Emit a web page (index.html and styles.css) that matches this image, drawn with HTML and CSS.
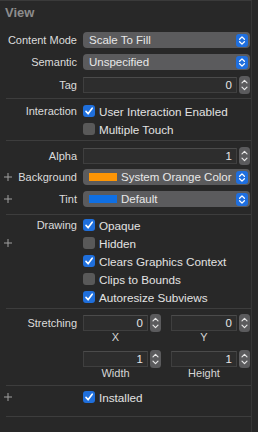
FILE: index.html
```html
<!DOCTYPE html>
<html lang="en">
<head>
    <meta charset="UTF-8">
    <meta name="viewport" content="width=device-width, initial-scale=1.0">
    <title>View Inspector</title>
    <link rel="stylesheet" href="styles.css">
</head>
<body>
    <div class="panel">
        <div class="header">View</div>

        <div class="section s-view">
            <div class="row">
                <span class="label">Content Mode</span>
                <div class="popup"><span>Scale To Fill</span>
                    <svg class="popup-arrows" width="12" height="13" viewBox="0 0 12 13"><rect width="12" height="13" rx="3" fill="#1f6fdf"/><path d="M3.6 5.2 L6 2.9 L8.4 5.2 M3.6 7.8 L6 10.1 L8.4 7.8" stroke="#fff" stroke-width="1.3" fill="none" stroke-linecap="round" stroke-linejoin="round"/></svg>
                </div>
            </div>
            <div class="row">
                <span class="label">Semantic</span>
                <div class="popup"><span>Unspecified</span>
                    <svg class="popup-arrows" width="12" height="13" viewBox="0 0 12 13"><rect width="12" height="13" rx="3" fill="#1f6fdf"/><path d="M3.6 5.2 L6 2.9 L8.4 5.2 M3.6 7.8 L6 10.1 L8.4 7.8" stroke="#fff" stroke-width="1.3" fill="none" stroke-linecap="round" stroke-linejoin="round"/></svg>
                </div>
            </div>
            <div class="row tag-row">
                <span class="label">Tag</span>
                <div class="num">
                    <div class="field">0</div>
                    <svg class="stepper" width="11" height="18" viewBox="0 0 11 18"><rect width="11" height="18" rx="3.5" fill="#5b5b5d"/><path d="M3 6.8 L5.5 4.3 L8 6.8 M3 11.2 L5.5 13.7 L8 11.2" stroke="#e8e8e8" stroke-width="1.2" fill="none" stroke-linecap="round" stroke-linejoin="round"/></svg>
                </div>
            </div>
        </div>
        <div class="sep"></div>

        <div class="section s-interaction">
            <div class="row check-row">
                <span class="label">Interaction</span>
                <div class="check"><span class="box on"><svg width="12" height="12" viewBox="0 0 12 12"><path d="M3 6.4 L5.1 8.8 L9.2 3.2" stroke="#fff" stroke-width="1.6" fill="none" stroke-linecap="round" stroke-linejoin="round"/></svg></span>User Interaction Enabled</div>
            </div>
            <div class="row check-row">
                <span class="label"></span>
                <div class="check"><span class="box"></span>Multiple Touch</div>
            </div>
        </div>
        <div class="sep"></div>

        <div class="section s-color">
            <div class="row alpha-row">
                <span class="label">Alpha</span>
                <div class="num">
                    <div class="field">1</div>
                    <svg class="stepper" width="11" height="18" viewBox="0 0 11 18"><rect width="11" height="18" rx="3.5" fill="#5b5b5d"/><path d="M3 6.8 L5.5 4.3 L8 6.8 M3 11.2 L5.5 13.7 L8 11.2" stroke="#e8e8e8" stroke-width="1.2" fill="none" stroke-linecap="round" stroke-linejoin="round"/></svg>
                </div>
            </div>
            <div class="row">
                <span class="label"><svg class="plus" width="8" height="8" viewBox="0 0 8 8"><path d="M4 0 V8 M0 4 H8" stroke="#a0a0a0" stroke-width="1"/></svg>Background</span>
                <div class="popup"><span class="swatch orange"></span><span>System Orange Color</span>
                    <svg class="popup-arrows" width="12" height="13" viewBox="0 0 12 13"><rect width="12" height="13" rx="3" fill="#1f6fdf"/><path d="M3.6 5.2 L6 2.9 L8.4 5.2 M3.6 7.8 L6 10.1 L8.4 7.8" stroke="#fff" stroke-width="1.3" fill="none" stroke-linecap="round" stroke-linejoin="round"/></svg>
                </div>
            </div>
            <div class="row">
                <span class="label"><svg class="plus" width="8" height="8" viewBox="0 0 8 8"><path d="M4 0 V8 M0 4 H8" stroke="#a0a0a0" stroke-width="1"/></svg>Tint</span>
                <div class="popup"><span class="swatch blue"></span><span>Default</span>
                    <svg class="popup-arrows" width="12" height="13" viewBox="0 0 12 13"><rect width="12" height="13" rx="3" fill="#1f6fdf"/><path d="M3.6 5.2 L6 2.9 L8.4 5.2 M3.6 7.8 L6 10.1 L8.4 7.8" stroke="#fff" stroke-width="1.3" fill="none" stroke-linecap="round" stroke-linejoin="round"/></svg>
                </div>
            </div>
        </div>
        <div class="sep"></div>

        <div class="section s-drawing">
            <div class="row check-row">
                <span class="label">Drawing</span>
                <div class="check"><span class="box on"><svg width="12" height="12" viewBox="0 0 12 12"><path d="M3 6.4 L5.1 8.8 L9.2 3.2" stroke="#fff" stroke-width="1.6" fill="none" stroke-linecap="round" stroke-linejoin="round"/></svg></span>Opaque</div>
            </div>
            <div class="row check-row">
                <span class="label"><svg class="plus" width="8" height="8" viewBox="0 0 8 8"><path d="M4 0 V8 M0 4 H8" stroke="#a0a0a0" stroke-width="1"/></svg></span>
                <div class="check"><span class="box"></span>Hidden</div>
            </div>
            <div class="row check-row">
                <span class="label"></span>
                <div class="check"><span class="box on"><svg width="12" height="12" viewBox="0 0 12 12"><path d="M3 6.4 L5.1 8.8 L9.2 3.2" stroke="#fff" stroke-width="1.6" fill="none" stroke-linecap="round" stroke-linejoin="round"/></svg></span>Clears Graphics Context</div>
            </div>
            <div class="row check-row">
                <span class="label"></span>
                <div class="check"><span class="box"></span>Clips to Bounds</div>
            </div>
            <div class="row check-row">
                <span class="label"></span>
                <div class="check"><span class="box on"><svg width="12" height="12" viewBox="0 0 12 12"><path d="M3 6.4 L5.1 8.8 L9.2 3.2" stroke="#fff" stroke-width="1.6" fill="none" stroke-linecap="round" stroke-linejoin="round"/></svg></span>Autoresize Subviews</div>
            </div>
        </div>
        <div class="sep"></div>

        <div class="section s-stretch">
            <div class="row pair-row">
                <span class="label">Stretching</span>
                <div class="pair">
                    <div class="cell">
                        <div class="num">
                            <div class="field">0</div>
                            <svg class="stepper" width="11" height="18" viewBox="0 0 11 18"><rect width="11" height="18" rx="3.5" fill="#5b5b5d"/><path d="M3 6.8 L5.5 4.3 L8 6.8 M3 11.2 L5.5 13.7 L8 11.2" stroke="#e8e8e8" stroke-width="1.2" fill="none" stroke-linecap="round" stroke-linejoin="round"/></svg>
                        </div>
                        <div class="sub">X</div>
                    </div>
                    <div class="cell">
                        <div class="num">
                            <div class="field">0</div>
                            <svg class="stepper" width="11" height="18" viewBox="0 0 11 18"><rect width="11" height="18" rx="3.5" fill="#5b5b5d"/><path d="M3 6.8 L5.5 4.3 L8 6.8 M3 11.2 L5.5 13.7 L8 11.2" stroke="#e8e8e8" stroke-width="1.2" fill="none" stroke-linecap="round" stroke-linejoin="round"/></svg>
                        </div>
                        <div class="sub">Y</div>
                    </div>
                </div>
            </div>
            <div class="row pair-row second">
                <span class="label"></span>
                <div class="pair">
                    <div class="cell">
                        <div class="num">
                            <div class="field">1</div>
                            <svg class="stepper" width="11" height="18" viewBox="0 0 11 18"><rect width="11" height="18" rx="3.5" fill="#5b5b5d"/><path d="M3 6.8 L5.5 4.3 L8 6.8 M3 11.2 L5.5 13.7 L8 11.2" stroke="#e8e8e8" stroke-width="1.2" fill="none" stroke-linecap="round" stroke-linejoin="round"/></svg>
                        </div>
                        <div class="sub">Width</div>
                    </div>
                    <div class="cell">
                        <div class="num">
                            <div class="field">1</div>
                            <svg class="stepper" width="11" height="18" viewBox="0 0 11 18"><rect width="11" height="18" rx="3.5" fill="#5b5b5d"/><path d="M3 6.8 L5.5 4.3 L8 6.8 M3 11.2 L5.5 13.7 L8 11.2" stroke="#e8e8e8" stroke-width="1.2" fill="none" stroke-linecap="round" stroke-linejoin="round"/></svg>
                        </div>
                        <div class="sub">Height</div>
                    </div>
                </div>
            </div>
        </div>
        <div class="sep"></div>

        <div class="section s-installed">
            <div class="row check-row">
                <span class="label"><svg class="plus" width="8" height="8" viewBox="0 0 8 8"><path d="M4 0 V8 M0 4 H8" stroke="#a0a0a0" stroke-width="1"/></svg></span>
                <div class="check"><span class="box on"><svg width="12" height="12" viewBox="0 0 12 12"><path d="M3 6.4 L5.1 8.8 L9.2 3.2" stroke="#fff" stroke-width="1.6" fill="none" stroke-linecap="round" stroke-linejoin="round"/></svg></span>Installed</div>
            </div>
        </div>
        <div class="sep"></div>
    </div>
</body>
</html>
```

FILE: styles.css
```css
body {
    margin: 0;
    background-color: #282828;
    font-family: "Liberation Sans", Arial, sans-serif;
    font-size: 11px;
    color: #dcdcdc;
}
.panel {
    width: 251px;
    height: 431px;
    border-top: 1px solid #3a3a3a;
    border-right: 1px solid #363636;
}
.header {
    height: 28px;
    line-height: 24px;
    padding-left: 5px;
    font-size: 13px;
    font-weight: bold;
    color: #8d8d8d;
}
.sep {
    height: 1px;
    margin-left: 6px;
    background-color: #3d3d3d;
}
.row {
    display: grid;
    grid-template-columns: 77px 167px;
    column-gap: 6px;
    align-items: center;
    height: 22px;
}
.label {
    display: flex;
    align-items: center;
    justify-content: flex-end;
    white-space: nowrap;
}
.plus {
    margin-left: 4px;
    margin-right: auto;
}

/* sections */
.s-view {
    padding-bottom: 2px;
}
.tag-row {
    margin-top: 1px;
}
.s-interaction {
    padding-top: 3px;
    padding-bottom: 2px;
}
.s-color {
    padding-top: 4px;
    padding-bottom: 4px;
}
.alpha-row {
    height: 21px;
}
.s-drawing {
    padding-top: 1px;
    padding-bottom: 2px;
}
.s-stretch {
    padding-top: 6px;
    padding-bottom: 5px;
}
.s-installed {
    padding-top: 2px;
    padding-bottom: 10px;
}

/* popup button */
.popup {
    display: flex;
    align-items: center;
    height: 16px;
    padding-left: 6px;
    padding-right: 2px;
    border-radius: 4px;
    background-color: #5b5b5d;
    color: #e8e8e8;
    font-size: 11.5px;
}
.popup-arrows {
    margin-left: auto;
}
.swatch {
    width: 28px;
    height: 8px;
    margin-right: 4px;
}
.orange {
    background-color: #fd9505;
}
.blue {
    background-color: #0f6fe3;
}

/* number fields */
.num {
    display: flex;
    align-items: center;
    gap: 2px;
    height: 16px;
}
.field {
    flex: 1;
    height: 16px;
    box-sizing: border-box;
    background-color: #2d2d2d;
    border: 1px solid #3f3f3f;
    border-top-color: #4b4b4b;
    text-align: right;
    padding-right: 4px;
    line-height: 14px;
    font-size: 11.5px;
    color: #e6e6e6;
}

/* checkboxes */
.check-row {
    height: 18px;
}
.check {
    display: flex;
    align-items: center;
    font-size: 11.7px;
    color: #e2e2e2;
    white-space: nowrap;
}
.box {
    width: 12px;
    height: 12px;
    margin-right: 4px;
    border-radius: 3px;
    background-color: #595959;
}
.box.on {
    background-color: #1f6fdc;
}
.box svg {
    display: block;
}

/* stretching */
.pair-row {
    height: auto;
    align-items: start;
}
.pair-row .label {
    line-height: 16px;
}
.pair-row.second {
    margin-top: 7px;
}
.pair {
    display: grid;
    grid-template-columns: 78px 79px;
    column-gap: 10px;
}
.sub {
    height: 13px;
    line-height: 13px;
    padding-right: 13px;
    text-align: center;
    color: #d6d6d6;
}
```
